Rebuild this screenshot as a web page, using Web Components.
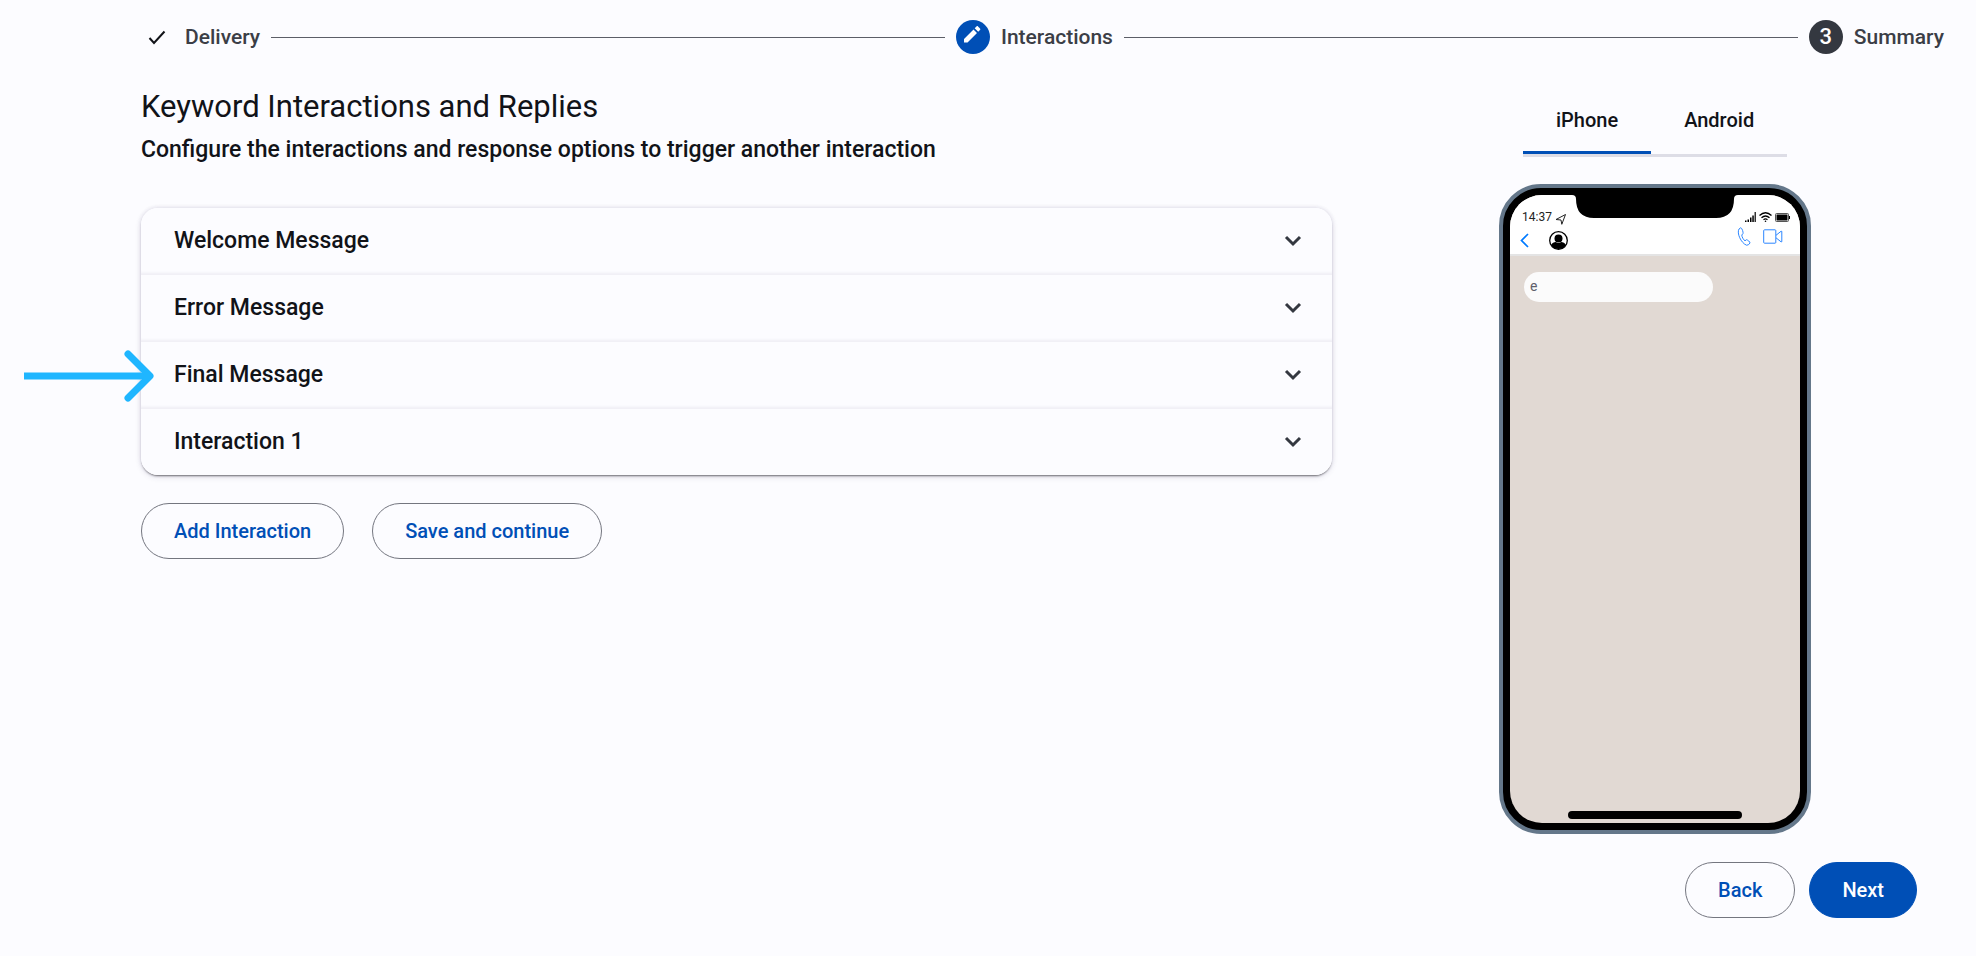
<!DOCTYPE html>
<html lang="en">
<head>
<meta charset="utf-8">
<meta name="viewport" content="width=device-width, initial-scale=1">
<title>Keyword Interactions and Replies</title>
<style>
    :root {
        --surface: #fcfcff;
        --text: #111318;
        --text-soft: #3b3e46;
        --primary: #004fb6;
        --outline: #74767f;
    }
    body {
        margin: 0;
        background: var(--surface);
        color: var(--text);
        font-family: Roboto, "Liberation Sans", sans-serif;
    }
</style>
</head>
<body>
<wizard-page>
    <wizard-stepper slot="stepper">
        <wizard-step state="done">Delivery</wizard-step>
        <wizard-step state="edit">Interactions</wizard-step>
        <wizard-step number="3">Summary</wizard-step>
    </wizard-stepper>

    <page-heading>
        Keyword Interactions and Replies
        <span slot="subtitle">Configure the interactions and response options to trigger another interaction</span>
    </page-heading>
    <message-list>
        <message-panel>Welcome Message</message-panel>
        <message-panel>Error Message</message-panel>
        <message-panel pointed>Final Message</message-panel>
        <message-panel>Interaction 1</message-panel>
    </message-list>
    <button-row>
        <pill-button>Add Interaction</pill-button>
        <pill-button>Save and continue</pill-button>
    </button-row>

    <device-tabs slot="preview"></device-tabs>
    <phone-preview slot="preview" time="14:37">e</phone-preview>

    <button-row slot="footer" dense>
        <pill-button>Back</pill-button>
        <pill-button filled>Next</pill-button>
    </button-row>
</wizard-page>

<script>
class WizardPage extends HTMLElement {
    constructor() {
        super();
        this.attachShadow({mode: 'open'});
    }
    connectedCallback() {
        this.shadowRoot.innerHTML = `
        <style>
            :host { display: block; }
            header { padding: 20px 32px 0 140px; }
            main {
                display: grid;
                grid-template-columns: 1.85fr 1fr;
                align-items: start;
                padding: 32px 0 0 141px;
            }
            aside {
                display: flex;
                flex-direction: column;
                align-items: center;
                gap: 27px;
                padding-left: 2px;
            }
            footer {
                display: flex;
                justify-content: flex-end;
                padding: 28px 59px 36px;
            }
        </style>
        <header><slot name="stepper"></slot></header>
        <main>
            <section><slot></slot></section>
            <aside><slot name="preview"></slot></aside>
        </main>
        <footer><slot name="footer"></slot></footer>
        `;
    }
}
window.customElements.define('wizard-page', WizardPage);


class WizardStepper extends HTMLElement {
    constructor() {
        super();
        this.attachShadow({mode: 'open'});
    }
    connectedCallback() {
        this.shadowRoot.innerHTML = `
        <style>
            :host { display: flex; align-items: center; }
        </style>
        <slot></slot>
        `;
    }
}
window.customElements.define('wizard-stepper', WizardStepper);


const stepIcons = {
    done: '<svg width="24" height="24" viewBox="0 0 24 24"><path d="M4.500 13 9 18 19.500 6.500" fill="none" stroke="#111318" stroke-width="2"/></svg>',
    edit: '<svg width="24" height="24" viewBox="0 0 24 24"><path d="M3 13.900V17.400h3.500L16 7.900 12.500 4.400zM13.700 3.200l3.500 3.500 1.800-1.800c.5-.5.5-1 0-1.500l-2-2c-.5-.5-1-.5-1.500 0z" fill="#fff"/></svg>'
};

class WizardStep extends HTMLElement {
    constructor() {
        super();
        this.attachShadow({mode: 'open'});
    }
    connectedCallback() {
        const state = this.getAttribute('state');
        this.shadowRoot.innerHTML = `
        <style>
            :host {
                display: flex;
                flex: 1 1 auto;
                align-items: center;
                gap: 11px;
                color: var(--text-soft);
                font-size: 21px;
                font-weight: 500;
                line-height: 24px;
            }
            :host(:last-child) { flex: none; }
            :host(:last-child) .line { display: none; }
            .mark {
                display: flex;
                align-items: center;
                justify-content: center;
                flex: none;
                width: 34px;
                height: 34px;
                border-radius: 50%;
                background: #343840;
                color: #fff;
                font-size: 22px;
            }
            .mark.done { background: none; }
            .mark.edit { background: var(--primary); }
            .mark svg { display: block; }
            .line {
                flex: 1;
                height: 1px;
                margin-right: 11px;
                background: #5c5e67;
            }
        </style>
        <span class="mark ${state || ''}">${stepIcons[state] || this.getAttribute('number')}</span>
        <span class="label"><slot></slot></span>
        <span class="line"></span>
        `;
    }
}
window.customElements.define('wizard-step', WizardStep);


class PageHeading extends HTMLElement {
    constructor() {
        super();
        this.attachShadow({mode: 'open'});
    }
    connectedCallback() {
        this.shadowRoot.innerHTML = `
        <style>
            :host { display: block; }
            h1, h2 { margin: 0; }
            h1 {
                font-size: 31px;
                font-weight: 400;
                line-height: 42px;
            }
            h2 {
                margin-top: 6px;
                font-size: 23px;
                font-weight: 500;
                line-height: 32px;
            }
        </style>
        <h1><slot></slot></h1>
        <h2><slot name="subtitle"></slot></h2>
        `;
    }
}
window.customElements.define('page-heading', PageHeading);


class MessageList extends HTMLElement {
    constructor() {
        super();
        this.attachShadow({mode: 'open'});
    }
    connectedCallback() {
        this.shadowRoot.innerHTML = `
        <style>
            :host {
                display: block;
                margin: 42px 0 28px;
                border-radius: 17px;
                box-shadow: 0 2px 2px -1px #00000080, 0 0 4px #3c326426, 0 2px 6px #3c32641f;
            }
        </style>
        <slot></slot>
        `;
    }
}
window.customElements.define('message-list', MessageList);


class MessagePanel extends HTMLElement {
    constructor() {
        super();
        this.attachShadow({mode: 'open'});
    }
    connectedCallback() {
        this.shadowRoot.innerHTML = `
        <style>
            :host { display: block; position: relative; }
            button {
                display: flex;
                align-items: center;
                justify-content: space-between;
                box-sizing: border-box;
                width: 100%;
                min-height: 67px;
                padding: 0 30px 0 33px;
                border: solid #f1f0f6;
                border-width: 0 0 1px;
                background: var(--surface);
                box-shadow: inset 0 -3px 3px -2px #eeedf4;
                color: inherit;
                font: 500 23px/32px Roboto, "Liberation Sans", sans-serif;
                cursor: pointer;
            }
            :host(:first-child) button { border-radius: 17px 17px 0 0; }
            :host(:last-child) button {
                min-height: 66px;
                border-width: 0;
                border-radius: 0 0 17px 17px;
                box-shadow: none;
            }
            .pointer { display: none; }
            :host([pointed]) .pointer {
                display: block;
                position: absolute;
                top: 7px;
                left: -117px;
            }
        </style>
        <button type="button" aria-expanded="false">
            <span><slot></slot></span>
            <svg width="18" height="12" viewBox="0 0 18 12"><path d="M2 2l7 7 7-7" fill="none" stroke="#343840" stroke-width="3"/></svg>
        </button>
        <svg class="pointer" width="132" height="54" viewBox="0 0 132 54">
            <path d="M0 27H124" fill="none" stroke="#1fb6ff" stroke-width="7"/>
            <path d="M104 5l22 22-22 22" fill="none" stroke="#1fb6ff" stroke-width="7" stroke-linecap="round" stroke-linejoin="round"/>
        </svg>
        `;
        const button = this.shadowRoot.querySelector('button');
        button.addEventListener('click', () => {
            this.dispatchEvent(new Event('onPanelClick'));
        });
    }
}
window.customElements.define('message-panel', MessagePanel);


class ButtonRow extends HTMLElement {
    constructor() {
        super();
        this.attachShadow({mode: 'open'});
    }
    connectedCallback() {
        this.shadowRoot.innerHTML = `
        <style>
            :host { display: flex; gap: 28px; }
            :host([dense]) { gap: 14px; }
        </style>
        <slot></slot>
        `;
    }
}
window.customElements.define('button-row', ButtonRow);


class PillButton extends HTMLElement {
    constructor() {
        super();
        this.attachShadow({mode: 'open'});
    }
    connectedCallback() {
        this.shadowRoot.innerHTML = `
        <style>
            :host { display: block; }
            button {
                display: block;
                height: 56px;
                padding: 0 32px;
                border: 1px solid var(--outline);
                border-radius: 28px;
                background: transparent;
                color: var(--primary);
                font: 500 20px/28px Roboto, "Liberation Sans", sans-serif;
                cursor: pointer;
            }
            :host([filled]) button {
                border-color: var(--primary);
                background: var(--primary);
                color: #fff;
            }
        </style>
        <button type="button"><slot></slot></button>
        `;
    }
}
window.customElements.define('pill-button', PillButton);


class DeviceTabs extends HTMLElement {
    constructor() {
        super();
        this.attachShadow({mode: 'open'});
    }
    connectedCallback() {
        this.shadowRoot.innerHTML = `
        <style>
            :host { display: block; }
            div { display: flex; border-bottom: 3px solid #dddde6; }
            button {
                height: 68px;
                padding: 0 33px;
                border: solid transparent;
                border-width: 3px 0;
                background: none;
                color: inherit;
                font: 500 20px/28px Roboto, "Liberation Sans", sans-serif;
                cursor: pointer;
            }
            button[aria-selected="true"] { border-bottom-color: var(--primary); }
        </style>
        <div role="tablist">
            <button type="button" role="tab" aria-selected="true">iPhone</button>
            <button type="button" role="tab" aria-selected="false">Android</button>
        </div>
        `;
        const tabs = this.shadowRoot.querySelectorAll('button');
        tabs.forEach((tab) => {
            tab.addEventListener('click', () => {
                tabs.forEach((t) => t.setAttribute('aria-selected', t === tab));
            });
        });
    }
}
window.customElements.define('device-tabs', DeviceTabs);


class PhonePreview extends HTMLElement {
    constructor() {
        super();
        this.attachShadow({mode: 'open'});
    }
    connectedCallback() {
        this.shadowRoot.innerHTML = `
        <style>
            :host {
                display: block;
                border: 4px solid #64778a;
                border-radius: 42px;
                background: #000;
            }
            .screen {
                position: relative;
                display: flex;
                flex-direction: column;
                width: 290px;
                height: 628px;
                margin: 7px;
                border-radius: 32px;
                background: #e1d9d3;
                overflow: hidden;
            }
            .notch {
                position: absolute;
                top: 0;
                left: 50%;
                width: 166px;
                height: 23px;
                transform: translateX(-50%);
            }
            .top {
                height: 59px;
                border-bottom: 2px solid #e4e4e4;
                background: #fff;
            }
            .status, .contact {
                display: flex;
                align-items: center;
                justify-content: space-between;
            }
            .status { padding: 14px 10px 0 12px; height: 16px; }
            .contact { padding: 0 17px 0 10px; height: 30px; }
            .group { display: flex; align-items: center; }
            .status .group { gap: 3px; }
            .time { font-size: 12px; line-height: 16px; color: #222; }
            .back { margin-right: 20px; }
            .call { gap: 12px; padding-bottom: 8px; }
            svg { display: block; }
            .bubble {
                width: 177px;
                height: 30px;
                margin: 16px 0 0 14px;
                padding: 0 6px;
                border-radius: 15px;
                background: #fbfbfb;
                color: #5f5f6b;
                font-size: 14px;
                line-height: 28px;
            }
            .home {
                width: 174px;
                height: 8px;
                margin: auto auto 4px;
                border-radius: 4px;
                background: #000;
            }
        </style>
        <div class="screen">
            <div class="top">
                <div class="status">
                    <div class="group">
                        <span class="time">${this.getAttribute('time')}</span>
                        <svg width="12" height="16" viewBox="0 0 12 16"><path d="M1 10.500 10.500 5.500 6.800 15.300 6 11z" fill="none" stroke="#222" stroke-linejoin="round"/></svg>
                    </div>
                    <div class="group">
                        <svg width="11" height="10" viewBox="0 0 11 10"><path d="M0 8.500h1.500V10H0zM2.500 7.500H4V10H2.500zM5 5.500h1.500V10H5zM7.300 3.500h1.500V10H7.300zM9.600 0H10.800v10H9.600z"/></svg>
                        <svg width="13" height="10" viewBox="0 0 13 10"><path d="M.5 3.500q6-5.500 12 0M2.500 5.700q4-3.500 8 0M4.500 7.700q2-1.500 4 0" fill="none" stroke="#000" stroke-width="1.300"/><circle cx="6.500" cy="9.200" r=".8"/></svg>
                        <svg width="15" height="9" viewBox="0 0 15 9"><rect x=".5" y=".5" width="13" height="8" rx="1" fill="#fff" stroke="#555"/><path d="M1.500 1.500h11v6h-11zM14 3h1v3h-1z"/></svg>
                    </div>
                </div>
                <div class="contact">
                    <div class="group">
                        <svg class="back" width="9" height="15" viewBox="0 0 9 15"><path d="M8 1 1.500 7.500 8 14" fill="none" stroke="#007aff" stroke-width="1.700"/></svg>
                        <svg width="19" height="19" viewBox="0 0 19 19"><circle cx="9.500" cy="9.500" r="8.800" fill="#fff" stroke="#000" stroke-width="1.300"/><circle cx="9.500" cy="7.500" r="4"/><path d="M2 14c1-2 3-2.800 4.800-3q2.700 2 5.400 0c1.800.2 3.800 1 4.800 3a9 9 0 0 1-15 0z"/></svg>
                    </div>
                    <div class="group call">
                        <svg width="14" height="19" viewBox="0 0 14 19"><path d="M3.800.7 2 2C-.5 6 4 16 9.500 18.200q2 .3 3.500-2.200c.3-1-2.500-3.200-3.500-3.300L8 13.800C6.500 13 4.800 9.800 4.800 8L6 6.500C6.500 5.500 5 1 3.800.7z" fill="none" stroke="#2c86ff" stroke-linejoin="round"/></svg>
                        <svg width="20" height="15" viewBox="0 0 20 15"><path d="M1.500.8h10.500q.8 0 .8.8v11.800q0 .8-.8.8H1.500q-.8 0-.8-.8V1.600q0-.8.8-.8zM13 6.300l5-4h.8v10.500h-.8l-5-4" fill="none" stroke="#2c86ff" stroke-linejoin="round"/></svg>
                    </div>
                </div>
            </div>
            <svg class="notch" viewBox="0 0 166 23"><path d="M0 0H166Q162 0 162 4 162 23 144 23H22Q4 23 4 4 4 0 0 0z"/></svg>
            <div class="bubble"><slot></slot></div>
            <div class="home"></div>
        </div>
        `;
    }
}
window.customElements.define('phone-preview', PhonePreview);
</script>
</body>
</html>
